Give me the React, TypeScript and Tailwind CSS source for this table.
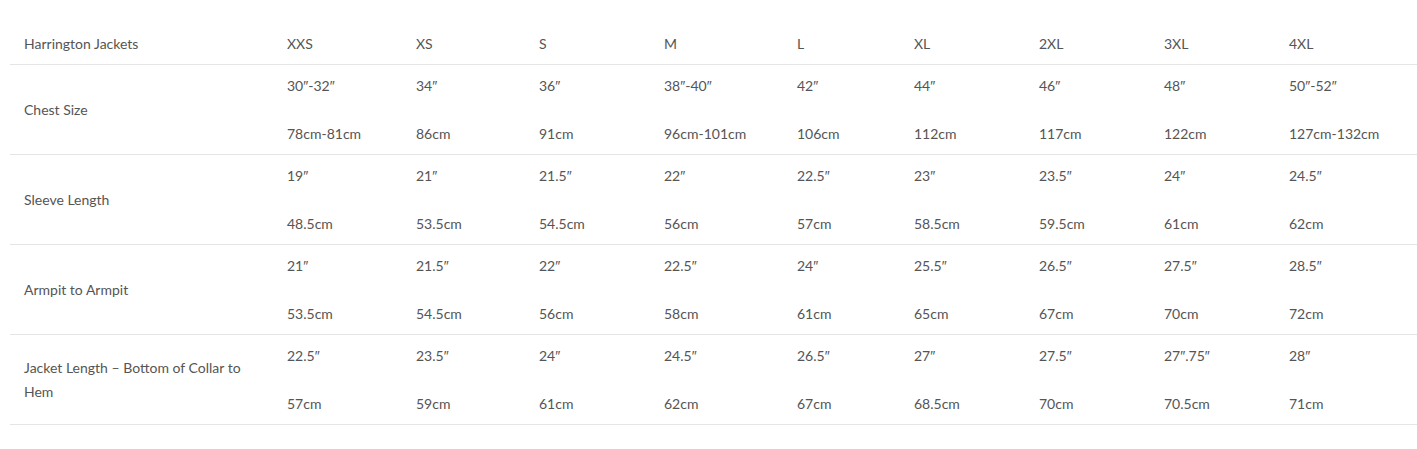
import React from "react";

const sizes = ["XXS", "XS", "S", "M", "L", "XL", "2XL", "3XL", "4XL"];

const rows: { label: string; top: string[]; bottom: string[] }[] = [
  {
    label: "Chest Size",
    top: ["30″-32″", "34″", "36″", "38″-40″", "42″", "44″", "46″", "48″", "50″-52″"],
    bottom: ["78cm-81cm", "86cm", "91cm", "96cm-101cm", "106cm", "112cm", "117cm", "122cm", "127cm-132cm"],
  },
  {
    label: "Sleeve Length",
    top: ["19″", "21″", "21.5″", "22″", "22.5″", "23″", "23.5″", "24″", "24.5″"],
    bottom: ["48.5cm", "53.5cm", "54.5cm", "56cm", "57cm", "58.5cm", "59.5cm", "61cm", "62cm"],
  },
  {
    label: "Armpit to Armpit",
    top: ["21″", "21.5″", "22″", "22.5″", "24″", "25.5″", "26.5″", "27.5″", "28.5″"],
    bottom: ["53.5cm", "54.5cm", "56cm", "58cm", "61cm", "65cm", "67cm", "70cm", "72cm"],
  },
  {
    label: "Jacket Length – Bottom of Collar to Hem",
    top: ["22.5″", "23.5″", "24″", "24.5″", "26.5″", "27″", "27.5″", "27″.75″", "28″"],
    bottom: ["57cm", "59cm", "61cm", "62cm", "67cm", "68.5cm", "70cm", "70.5cm", "71cm"],
  },
];

const gridCols =
  "grid grid-cols-[263px_129px_123px_125px_133px_117px_125px_125px_125px_1fr]";

function Inch({ text }: { text: string }) {
  const parts = text.split("″");
  return (
    <span>
      {parts.map((p, i) => (
        <React.Fragment key={i}>
          {p}
          {i < parts.length - 1 && (
            <span className="font-light" style={{ fontFamily: "'Liberation Sans', Arial, sans-serif" }}>
              ″
            </span>
          )}
        </React.Fragment>
      ))}
    </span>
  );
}

export default function App() {
  return (
    <div
      className="w-[1417px] h-[449px] bg-white pt-[23px] pl-[10px] text-[#555] text-[14px] leading-[24px]"
      style={{ fontFamily: "Lato, 'Open Sans', sans-serif" }}
    >
      <div className="w-[1407px]">
        <div className={`${gridCols} border-b border-[#e5e5e5]`}>
          <div className="pl-[14px] pt-[9px] pb-[8px]">Harrington Jackets</div>
          {sizes.map((s) => (
            <div key={s} className="pl-[14px] pt-[9px] pb-[8px]">
              {s}
            </div>
          ))}
        </div>
        {rows.map((r) => (
          <div key={r.label} className={`${gridCols} border-b border-[#e5e5e5]`}>
            <div className="pl-[14px] pr-[14px] pt-[9px] pb-[8px] flex items-center">
              <span>{r.label}</span>
            </div>
            {r.top.map((t, i) => (
              <div key={i} className="pl-[14px] pt-[9px] pb-[8px] flex flex-col">
                <Inch text={t} />
                <span className="h-[24px]" />
                <span>{r.bottom[i]}</span>
              </div>
            ))}
          </div>
        ))}
      </div>
    </div>
  );
}
